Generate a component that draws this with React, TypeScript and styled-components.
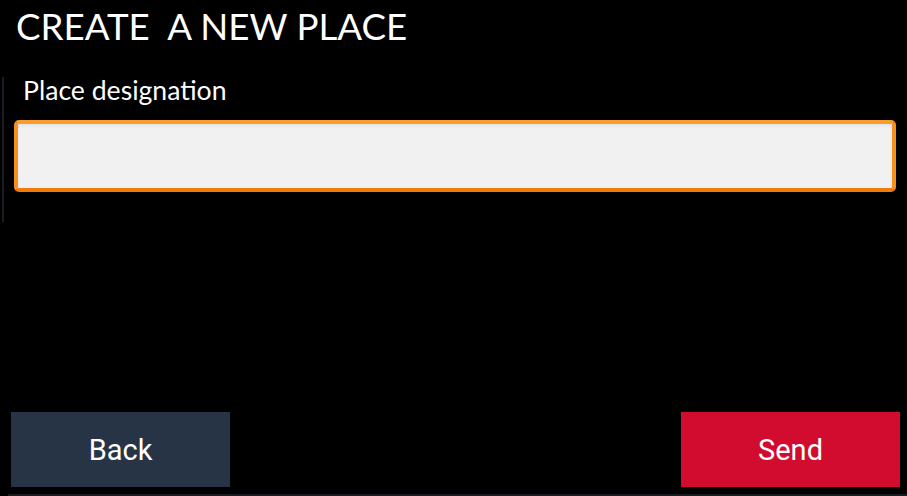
import React from "react";
import styled, { createGlobalStyle } from "styled-components";

const Global = createGlobalStyle`
  html, body { margin: 0; padding: 0; background: #000; }
  body { font-family: "Lato", "Noto Sans", sans-serif; color: #fff; }
  * { box-sizing: border-box; }
`;

const Page = styled.div`
  height: 100vh;
  display: flex;
  flex-direction: column;
  background: #000;
`;

const Title = styled.h1`
  margin: 0;
  height: 47px;
  padding: 4px 0 0 16px;
  font-family: "Lato", sans-serif;
  font-weight: 400;
  font-size: 36.7px;
  line-height: 44px;
  color: #fff;
  white-space: pre;
`;

const Field = styled.section`
  margin: 30px 0 0 2px;
  border-left: 2px solid #1c1c24;
  padding: 0 11px 30px 0;
  display: flex;
  flex-direction: column;
`;

const Label = styled.label`
  font-family: "Lato", sans-serif;
  font-size: 26.6px;
  line-height: 27px;
  padding-left: 19px;
  color: #fff;
`;

const Input = styled.input`
  margin: 16px 0 0 10px;
  height: 72px;
  border: 4px solid #f5901e;
  border-top-color: #f99c2c;
  border-bottom-color: #f07a0a;
  border-radius: 5px;
  background: #f1f1f1;
  box-shadow: inset 0 2px 3px rgba(0, 0, 0, 0.06);
  font-family: "Roboto", sans-serif;
  font-size: 24px;
  padding: 0 12px;
  outline: none;
`;

const Spacer = styled.div`
  flex: 1;
`;

const Footer = styled.footer`
  display: flex;
  justify-content: space-between;
  margin-left: 8px;
  padding: 0 7px 7px 3px;
  border-bottom: 2px solid #1a1a22;
`;

const Button = styled.button<{ $variant: "back" | "send" }>`
  width: 219px;
  height: 75px;
  border: none;
  border-radius: 0;
  background: ${(p) => (p.$variant === "send" ? "#d10c2e" : "#263445")};
  color: #fff;
  font-family: "Roboto", sans-serif;
  font-size: 29px;
  padding: 0;
  cursor: pointer;
`;

export default function App() {
  return (
    <Page>
      <Global />
      <Title>{"CREATE  A NEW PLACE"}</Title>
      <Field>
        <Label htmlFor="place">Place designation</Label>
        <Input id="place" type="text" />
      </Field>
      <Spacer />
      <Footer>
        <Button $variant="back">Back</Button>
        <Button $variant="send">Send</Button>
      </Footer>
    </Page>
  );
}
